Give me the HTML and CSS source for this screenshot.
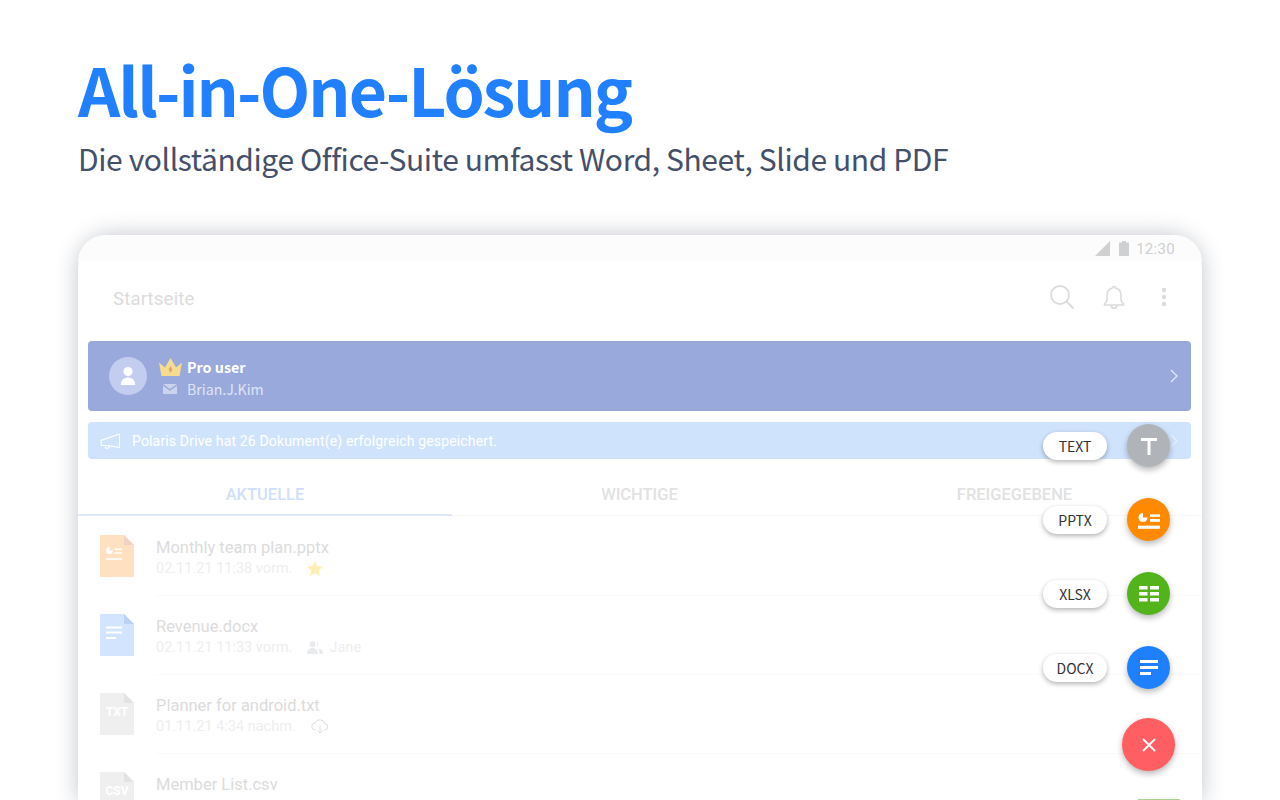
FILE: index.html
```html
<!DOCTYPE html>
<html lang="de">
<head>
<meta charset="utf-8">
<title>All-in-One-Lösung</title>
<link rel="stylesheet" href="styles.css">
</head>
<body>
<header class="hero">
  <h1 class="hero-title">All-in-One-Lösung</h1>
  <p class="hero-sub">Die vollständige Office-Suite umfasst Word, Sheet, Slide und PDF</p>
</header>
<main class="device">
  <div class="status">
    <svg class="st-signal" width="15" height="15" viewBox="0 0 15 15"><path d="M15 0V15H0Z" fill="#cfd0d2"/></svg>
    <svg class="st-batt" width="10" height="15" viewBox="0 0 10 15"><path d="M3 0H7V1.500H10V15H0V1.500H3Z" fill="#cfd0d2"/></svg>
    <span class="st-time">12:30</span>
  </div>
  <div class="appbar">
    <span class="appbar-title">Startseite</span>
    <div class="appbar-icons">
      <svg width="26" height="26" viewBox="0 0 26 26" fill="none" stroke="#dcdcdc" stroke-width="1.800"><circle cx="11" cy="11" r="9"/><path d="M17.500 17.500l6.500 6.500" stroke-linecap="round"/></svg>
      <svg width="26" height="26" viewBox="0 0 26 26" fill="none" stroke="#dcdcdc" stroke-width="1.600"><path d="M13 2.500c-1 0-1.600.7-1.600 1.600C8 5 6 8 6 11.500v4c0 2-1.300 3-2.500 4.500v1h19v-1C21.300 18.500 20 17.500 20 15.500v-4C20 8 18 5 14.600 4.100 14.600 3.200 14 2.500 13 2.500Z"/><path d="M10 21.500c.3 1.700 1.500 2.700 3 2.700s2.700-1 3-2.700"/></svg>
      <svg class="dots" width="6" height="20" viewBox="0 0 6 20" fill="#dcdcdc"><circle cx="3" cy="3" r="2.200"/><circle cx="3" cy="10" r="2.200"/><circle cx="3" cy="17" r="2.200"/></svg>
    </div>
  </div>
  <section class="banner-pro">
    <div class="avatar">
      <svg width="22" height="22" viewBox="0 0 22 22" fill="#fff"><circle cx="11" cy="6.500" r="4.600"/><path d="M3.800 20c0-4.800 3-7.500 7.200-7.500s7.200 2.700 7.200 7.500Z"/></svg>
    </div>
    <div class="pro-text">
      <div class="pro-line">
        <svg class="pro-crown" width="23" height="18" viewBox="0 0 23 18"><path d="M0 4.500L6 9.500 11.500 0 17 9.500 23 4.500 20.500 18H2.500Z" fill="#f6dc8e"/><path d="M11.500 8l2 3.500-2 3.500-2-3.500Z" fill="#d9a585"/></svg>
        <strong class="pro-name">Pro user</strong>
      </div>
      <div class="pro-line">
        <svg class="pro-mail" width="14" height="10" viewBox="0 0 14 10"><path d="M0 0H14L7 5Z M0 1.800L7 6.800 14 1.800V10H0Z" fill="#ccd3ec"/></svg>
        <span class="pro-user">Brian.J.Kim</span>
      </div>
    </div>
    <svg class="chev" width="8" height="14" viewBox="0 0 8 14" fill="none" stroke="#e6eaf7" stroke-width="1.200"><path d="M1 1l6 6-6 6"/></svg>
  </section>
  <section class="banner-note">
    <svg width="21" height="16" viewBox="0 0 21 16" fill="none" stroke="#fff" stroke-width="1.100"><path d="M19.500 1V14.500L7.500 12.500H1.500L1 8.500 1 7.500Z"/><path d="M5 12.800l.8 2.500 3.500-.5-.5-1.800"/></svg>
    <span class="note-text">Polaris Drive hat 26 Dokument(e) erfolgreich gespeichert.</span>
    <svg class="chev" width="8" height="14" viewBox="0 0 8 14" fill="none" stroke="#e6f0fd" stroke-width="1.200"><path d="M1 1l6 6-6 6"/></svg>
  </section>
  <nav class="tabs">
    <span class="tab tab-active">AKTUELLE</span>
    <span class="tab">WICHTIGE</span>
    <span class="tab">FREIGEGEBENE</span>
  </nav>
  <ul class="files">
    <li class="file">
      <svg class="doc" width="34" height="42" viewBox="0 0 34 42"><path d="M1 0H24L34 10V41a1 1 0 0 1-1 1H1a1 1 0 0 1-1-1V1a1 1 0 0 1 1-1Z" fill="#ffe1c2"/><path d="M24 0L34 10H24Z" fill="#f3d2c4"/><path d="M9.500 15.500V12A3.500 3.500 0 1 0 13 15.500Z" fill="#fff"/><path d="M14.500 14.200h7.500M14.500 18h7.500M6 24h16" stroke="#fff" stroke-width="1.600"/></svg>
      <div class="file-body">
        <div class="file-name">Monthly team plan.pptx</div>
        <div class="file-meta"><span>02.11.21 11:38 vorm.</span>
          <svg width="16" height="15" viewBox="0 0 16 15"><path d="M8 0l2.400 5 5.600.7-4.100 3.800 1.100 5.500L8 12.300 3 15l1.100-5.500L0 5.700 5.600 5Z" fill="#fdeeb5"/></svg>
        </div>
      </div>
    </li>
    <li class="file">
      <svg class="doc" width="34" height="42" viewBox="0 0 34 42"><path d="M1 0H24L34 10V41a1 1 0 0 1-1 1H1a1 1 0 0 1-1-1V1a1 1 0 0 1 1-1Z" fill="#d2e4fe"/><path d="M24 0L34 10H24Z" fill="#bcd2f5"/><path d="M6 13.500h16M6 18.500h16M6 24h10" stroke="#fff" stroke-width="2"/></svg>
      <div class="file-body">
        <div class="file-name">Revenue.docx</div>
        <div class="file-meta"><span>02.11.21 11:33 vorm.</span>
          <svg width="16" height="13" viewBox="0 0 16 13" fill="#e8eaed"><circle cx="5.500" cy="3.200" r="3"/><path d="M0 13c0-4 2-6 5.500-6S11 9 11 13Z"/><path d="M9.500.4a3 3 0 0 1 0 5.700c1-1.800 1-3.900 0-5.700ZM11 7.200c3 .3 5 2 5 5.800h-3.500c0-2.500-.5-4.300-1.500-5.800Z"/></svg>
          <span>Jane</span>
        </div>
      </div>
    </li>
    <li class="file">
      <div class="doc-labelled">
        <svg width="34" height="42" viewBox="0 0 34 42"><path d="M1 0H24L34 10V41a1 1 0 0 1-1 1H1a1 1 0 0 1-1-1V1a1 1 0 0 1 1-1Z" fill="#efefef"/><path d="M24 0L34 10H24Z" fill="#e3e3e3"/></svg>
        <span class="doc-tag">TXT</span>
      </div>
      <div class="file-body">
        <div class="file-name">Planner for android.txt</div>
        <div class="file-meta"><span>01.11.21 4:34 nachm.</span>
          <svg width="18" height="15" viewBox="0 0 18 15" fill="none" stroke="#dedede" stroke-width="1"><path d="M5 11H4.500A3.500 3.500 0 0 1 4 4 5 5 0 0 1 13.500 4.500 3.200 3.200 0 0 1 13.500 11H13"/><path d="M9 6.500V14M6.500 11.500L9 14l2.500-2.500"/></svg>
        </div>
      </div>
    </li>
    <li class="file">
      <div class="doc-labelled">
        <svg width="34" height="42" viewBox="0 0 34 42"><path d="M1 0H24L34 10V41a1 1 0 0 1-1 1H1a1 1 0 0 1-1-1V1a1 1 0 0 1 1-1Z" fill="#efefef"/><path d="M24 0L34 10H24Z" fill="#e3e3e3"/></svg>
        <span class="doc-tag">CSV</span>
      </div>
      <div class="file-body">
        <div class="file-name">Member List.csv</div>
      </div>
    </li>
  </ul>
  <div class="thumb"></div>
  <div class="fab-menu">
    <div class="fab-row">
      <span class="fab-label">TEXT</span>
      <span class="fab fab-text"><svg width="18" height="18" viewBox="0 0 18 18" fill="#fff"><path d="M1 1H17V4H10.500V18H7.500V4H1Z"/></svg></span>
    </div>
    <div class="fab-row">
      <span class="fab-label">PPTX</span>
      <span class="fab fab-pptx"><svg width="22" height="18" viewBox="0 0 22 18" fill="#fff"><path d="M5 6.500V2a4.500 4.500 0 1 0 4.500 4.500Z"/><rect x="12" y="3.300" width="10" height="2.600"/><rect x="12" y="8" width="10" height="2.800"/><rect x="0" y="14.600" width="22" height="3.200"/></svg></span>
    </div>
    <div class="fab-row">
      <span class="fab-label">XLSX</span>
      <span class="fab fab-xlsx"><svg width="20" height="16" viewBox="0 0 20 16" fill="#fff"><rect width="8.500" height="3.500"/><rect x="11" width="9" height="3.500"/><rect y="6" width="8.500" height="3.500"/><rect x="11" y="6" width="9" height="3.500"/><rect y="12" width="8.500" height="3.500"/><rect x="11" y="12" width="9" height="3.500"/></svg></span>
    </div>
    <div class="fab-row">
      <span class="fab-label">DOCX</span>
      <span class="fab fab-docx"><svg width="18" height="16" viewBox="0 0 18 16" fill="#fff"><rect width="18" height="3"/><rect y="6" width="18" height="3"/><rect y="12" width="11" height="3"/></svg></span>
    </div>
    <div class="fab-row">
      <span class="fab fab-close"><svg width="16" height="16" viewBox="0 0 16 16" fill="none" stroke="#fff" stroke-width="1.800"><path d="M2 2l12 12M14 2L2 14"/></svg></span>
    </div>
  </div>
</main>
</body>
</html>
```
FILE: styles.css
```css
* { box-sizing: border-box; }
html, body { margin: 0; padding: 0; height: 800px; overflow: hidden; background: #fff; }
body { font-family: "Roboto", "Liberation Sans", sans-serif; }

.hero { padding: 46px 0 0 78px; height: 235px; }
.hero-title {
  margin: 0; font-family: "Noto Sans CJK KR", "Noto Sans", sans-serif;
  font-size: 66px; line-height: 84px; font-weight: 700; color: #2080ff; letter-spacing: -1.950px;
}
.hero-sub {
  margin: 0; padding-top: 7px; font-family: "Noto Sans CJK KR", "Noto Sans", sans-serif;
  font-size: 30px; line-height: 42px; font-weight: 400; color: #44506a; letter-spacing: -.4px;
}

.device {
  position: relative; width: 1124px; height: 565px; margin-left: 78px;
  border-radius: 34px 34px 0 0; background: #fff;
  box-shadow: 0 0 22px rgba(50, 60, 80, .3);
}
.status {
  height: 27px; background: #fcfcfc; border-radius: 34px 34px 0 0;
  display: flex; align-items: center; justify-content: flex-end; gap: 8px; padding: 0 27px 0 0;
}
.st-batt { margin-left: 1px; }
.st-time { font-size: 15px; color: #cfd0d2; letter-spacing: .3px; margin-left: -1px; }

.appbar { height: 79px; display: flex; align-items: center; justify-content: space-between; padding: 0 35px 9px 35px; }
.appbar-title { font-size: 18.500px; color: #dcdcdc; letter-spacing: .2px; margin-top: 4px; }
.appbar-icons { display: flex; align-items: center; gap: 26px; }
.dots { margin-left: 8px; }

.banner-pro {
  margin: 0 11px 0 10px; height: 70px; border-radius: 4px; background: #99a9dc;
  display: flex; align-items: center; padding: 0 13px 0 21px;
}
.avatar {
  width: 38px; height: 38px; border-radius: 50%; background: #c2cdf0;
  display: flex; align-items: center; justify-content: center;
}
.pro-text { margin-left: 12px; flex: 1; display: flex; flex-direction: column; gap: 3px; padding-top: 3px; font-family: "Noto Sans CJK KR", "Noto Sans", sans-serif; }
.pro-line { display: flex; align-items: center; height: 19px; }
.pro-crown { margin-right: 5px; }
.pro-mail { margin: 0 10px 0 4px; }
.pro-name { font-size: 14.300px; font-weight: 700; color: #fff; }
.pro-user { font-size: 14.200px; color: #dfe4f5; }

.banner-note {
  margin: 11px 11px 0 10px; height: 37px; border-radius: 4px; background: #d0e3fd;
  display: flex; align-items: center; padding: 0 13px 0 12px; gap: 11px;
}
.note-text { flex: 1; font-size: 14px; color: #fff; letter-spacing: .16px; }

.tabs { display: flex; height: 57px; border-bottom: 1px solid #f7f7f7; }
.tab {
  flex: 1; display: flex; align-items: center; justify-content: center; padding-top: 15px;
  font-size: 16.500px; font-weight: 500; color: #e2e2e2;
}
.tab-active { color: #cfe0fb; border-bottom: 2px solid #dfe8fa; margin-bottom: -1px; flex: 0 0 374px; }

.files { list-style: none; margin: 0; padding: 0; }
.file { height: 79px; display: flex; align-items: flex-start; padding: 19px 0 0 22px; }
.doc, .doc-labelled { flex: none; }
.doc-labelled { position: relative; width: 34px; height: 42px; }
.doc-labelled svg { display: block; }
.doc-tag { position: absolute; left: 0; right: 0; top: 12px; text-align: center; font-size: 12px; font-weight: 700; color: #fff; }
.file-body { margin-left: 22px; flex: 1; height: 59px; margin-top: 2px; border-bottom: 1px solid #fafafa; }
.file-name { font-size: 16.500px; line-height: 21px; color: #dcdcdc; }
.file-meta { display: flex; align-items: center; gap: 15px; font-size: 14.500px; line-height: 21px; color: #eeeeee; }
.file-meta span + svg + span { margin-left: -9px; }

.thumb { position: absolute; top: 564px; right: 22px; width: 42px; height: 1px; background: #a9d38f; }

.fab-menu { position: absolute; right: 27px; top: 189px; display: flex; flex-direction: column; align-items: flex-end; gap: 31px; }
.fab-row { display: flex; align-items: center; gap: 20px; padding-right: 5px; height: 43px; }
.fab-row:last-child { padding-right: 0; height: 53px; margin-top: -2px; }
.fab-label {
  width: 64px; height: 28px; border-radius: 14px; background: #fff; display: flex; align-items: center; justify-content: center;
  font-family: "Noto Sans CJK KR", "Noto Sans", sans-serif; font-size: 14px; color: #333;
  box-shadow: 0 2px 5px rgba(0, 0, 0, .3);
}
.fab {
  width: 43px; height: 43px; border-radius: 50%; display: flex; align-items: center; justify-content: center;
  box-shadow: 0 3px 6px rgba(0, 0, 0, .28);
}
.fab-text { background: #b0b4b8; }
.fab-pptx { background: #ff8a00; }
.fab-xlsx { background: #52b31b; }
.fab-docx { background: #1f80ff; }
.fab-close { width: 53px; height: 53px; background: #ff5e62; }
```
